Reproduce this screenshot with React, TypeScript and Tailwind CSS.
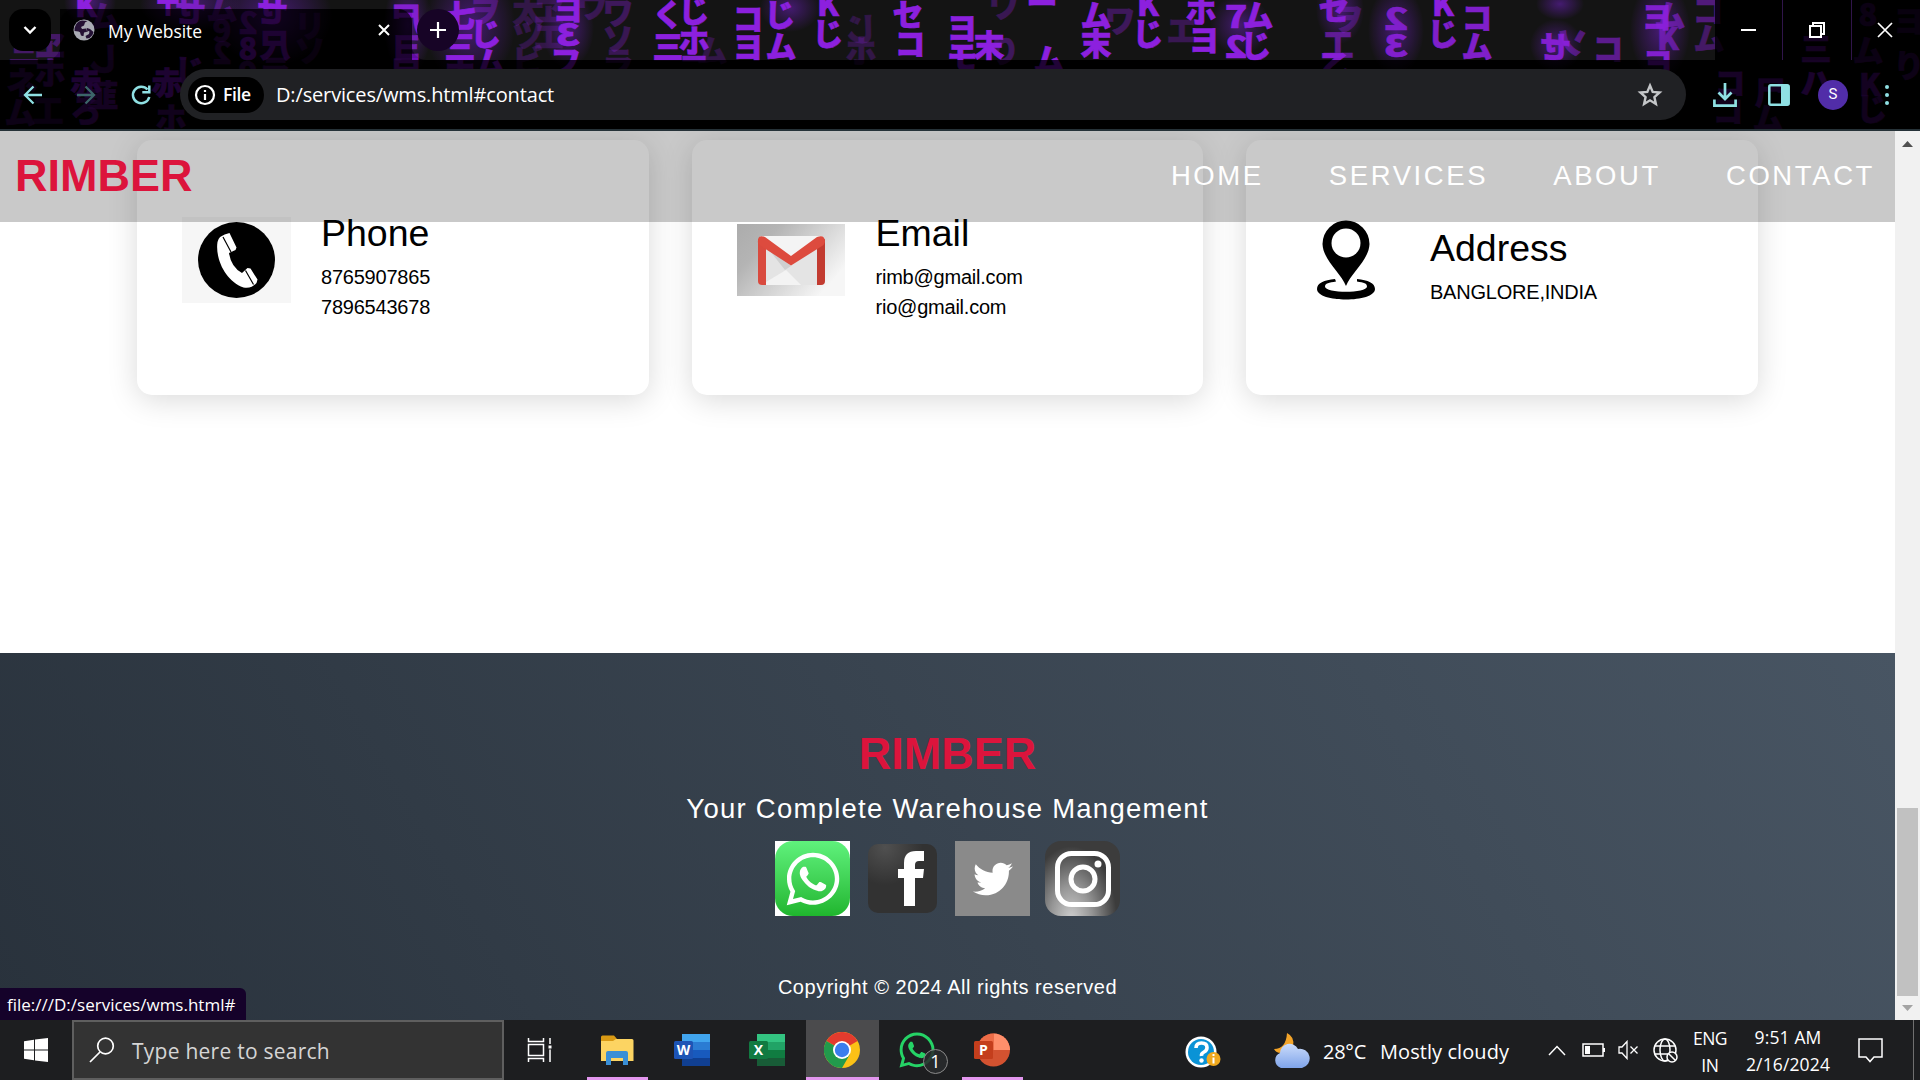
import React from "react";
import { FaWhatsapp, FaTwitter } from "react-icons/fa";

// character, centre x, centre y, opacity, horizontal scale
const glyphs: [string, number, number, number, number][] = [
  ["K", 86, 5, 1, 1], ["〒", 168, 3, 1, 1], ["せ", 190, 10, 0.8, -1], ["ム", 104, 16, 0.4, 1], ["し", 104, 58, 0.4, -1],
  ["2", 248, 22, 0.55, -1], ["8", 248, 48, 0.7, 1], ["せ", 272, 10, 1, -1], ["尺", 275, 45, 0.65, -1], ["9", 222, 30, 0.35, 1],
  ["ム", 222, 8, 0.4, 1], ["2", 222, 52, 0.35, -1], ["9", 248, 72, 0.4, 1], ["ラ", 275, 70, 0.4, 1], ["リ", 310, 25, 0.2, 1], ["ソ", 310, 50, 0.2, 1],
  ["赤", 86, 82, 0.9, 1], ["赤", 167, 82, 0.9, 1], ["じ", 190, 70, 0.7, 1], ["韮", 103, 95, 0.6, 1], ["ろ", 86, 110, 0.6, 1], ["ホ", 171, 118, 0.5, 1],
  ["ネ", 22, 82, 0.4, 1], ["ム", 20, 112, 0.4, 1], ["ヱ", 50, 45, 0.4, 1], ["ホ", 50, 72, 0.5, 1], ["工", 48, 110, 0.3, 1], ["三", 24, 50, 0.4, 1],
  ["尸", 407, 18, 0.9, -1], ["ヨ", 407, 46, 0.7, -1], ["尸", 407, 72, 0.8, -1], ["七", 460, 15, 1, 1], ["じ", 486, 33, 1, 1], ["三", 460, 46, 1, 1], ["ム", 490, 62, 1, 1], ["ホ", 460, 72, 0.8, 1],
  ["ヲ", 485, 10, 0.4, 1], ["太", 528, 10, 0.25, 1], ["ツ", 528, 35, 0.25, 1], ["ビ", 528, 60, 0.25, 1], ["ヱ", 549, 10, 0.25, 1], ["エ", 549, 36, 0.25, 1],
  ["ヨ", 568, 8, 1, 1], ["3", 568, 34, 1, -1.3], ["フ", 566, 61, 1, 1], ["ウ", 592, 5, 0.3, 1], ["ワ", 618, 12, 0.35, 1], ["ソ", 618, 38, 0.3, 1], ["ラ", 618, 62, 0.3, 1],
  ["く", 668, 14, 1, 1], ["じ", 694, 10, 1, 1], ["三", 668, 46, 1, 1], ["ホ", 694, 40, 1, 1], ["二", 694, 66, 0.9, 1], ["ム", 712, 50, 0.25, 1],
  ["コ", 748, 18, 1, 1], ["ヨ", 748, 46, 1, 1], ["じ", 780, 14, 1, 1], ["ム", 781, 46, 1, 1], ["K", 828, 4, 1, 1], ["じ", 828, 33, 1, 1],
  ["じ", 861, 28, 0.25, -1], ["ホ", 861, 50, 0.25, 1], ["セ", 908, 14, 1, 1], ["コ", 910, 43, 1, 1], ["ヨ", 962, 27, 1, 1], ["モ", 962, 56, 1, 1], ["末", 989, 45, 1, 1], ["ワ", 1004, 5, 0.3, 1], ["り", 1004, 50, 0.35, 1],
  ["ー", 1042, 2, 1, 1], ["ム", 1049, 59, 1, 1], ["ム", 1096, 15, 1, 1], ["末", 1096, 43, 1, 1], ["ワ", 1120, 20, 0.35, 1], ["K", 1148, 4, 1, 1], ["じ", 1148, 33, 1, 1],
  ["ホ", 1201, 10, 1, 1], ["ヨ", 1204, 39, 1, 1], ["エ", 1182, 30, 0.3, 1], ["7", 1236, 16, 1, 1.2], ["ム", 1258, 15, 1, 1], ["2", 1236, 46, 1, -1.2], ["じ", 1256, 45, 1, 1],
  ["セ", 1334, 8, 0.9, 1], ["ヲ", 1348, 18, 0.35, 1], ["工", 1338, 44, 0.6, 1], ["乙", 1335, 66, 0.9, 1], ["2", 1396, 18, 0.85, -1.3], ["3", 1396, 45, 0.9, -1.3], ["K", 1443, 4, 1, 1], ["じ", 1443, 33, 0.9, 1], ["コ", 1477, 17, 0.9, 1], ["ム", 1477, 46, 0.9, 1],
  ["せ", 1555, 46, 0.9, -1], ["ソ", 1572, 42, 0.5, -1], ["コ", 1608, 48, 0.6, 1], ["ヨ", 1657, 16, 0.9, 1], ["ム", 1670, 15, 0.6, 1], ["K", 1668, 38, 0.6, 1], ["ヨ", 1658, 62, 0.9, 1], ["コ", 1708, 10, 0.5, 1], ["ム", 1709, 38, 0.4, 1],
  ["コ", 1730, 82, 0.7, 1], ["尸", 1770, 92, 0.6, 1], ["ハ", 1816, 82, 0.8, 1], ["K", 1870, 84, 0.6, 1], ["じ", 1872, 108, 0.5, 1], ["三", 1816, 48, 0.7, 1], ["8", 1868, 14, 0.4, 1], ["ム", 1868, 50, 0.4, 1], ["り", 1909, 65, 0.4, 1], ["ヨ", 1909, 20, 0.3, 1], ["コ", 1728, 110, 0.5, 1], ["ム", 1768, 118, 0.4, 1],
];

const glows: [number, number, number, number][] = [
  [470, 25, 45, 60], [568, 28, 26, 40], [272, 15, 60, 50], [790, 8, 30, 24], [90, 2, 26, 24], [190, 4, 50, 28], [1396, 30, 28, 45], [1560, 4, 24, 16], [1660, 30, 30, 50], [1240, 25, 30, 30], [408, 25, 24, 50], [1340, 10, 24, 34], [1556, 45, 26, 26],
];

function Rain() {
  return (
    <svg className="absolute inset-0 h-full w-full" viewBox="0 0 1920 129" preserveAspectRatio="none">
      <defs>
        <radialGradient id="glow">
          <stop offset="0" stopColor="#6a10c8" stopOpacity="0.5" />
          <stop offset="1" stopColor="#6a10c8" stopOpacity="0" />
        </radialGradient>
      </defs>
      {glows.map(([x, y, rx, ry], i) => (
        <ellipse key={i} cx={x} cy={y} rx={rx} ry={ry} fill="url(#glow)" />
      ))}
      {glyphs.map(([c, x, y, o, f], i) => (
        <text key={i} transform={`translate(${x} ${y + 11.5}) scale(${f} 1)`} textAnchor="middle" fontSize="31" fontWeight="900" fill="#8410dc" stroke="#8410dc" strokeWidth="0.6" opacity={o} fontFamily='"Noto Sans CJK JP", sans-serif'>
          {c}
        </text>
      ))}
    </svg>
  );
}

function Browser() {
  return (
    <div className="relative h-[131px] shrink-0 overflow-hidden border-b-2 border-[#263238] bg-[#030303] font-['Open_Sans','Noto_Sans',sans-serif] text-white">
      <Rain />
      <div className="relative flex h-[60px]">
        <div className="relative flex w-[60px] justify-end rounded-br-[14px] bg-[#ffffff12]">
          <div className="mt-[9px] mr-[9px] flex h-[42px] w-[42px] items-center justify-center rounded-[14px] bg-black">
            <svg width="14" height="10" viewBox="0 0 14 10" fill="none" stroke="#fff" strokeWidth="2.4"><path d="M1.5 2l5.5 5.5L12.500 2" /></svg>
          </div>
        </div>
        <div className="flex w-[352px] flex-col">
          <div className="h-[9px] bg-[#ffffff12]" />
          <div className="flex flex-1 items-center rounded-t-[14px] bg-[#000000b0] pl-[13px]">
            <svg width="22" height="22" viewBox="0 0 22 22" className="-mt-[10px]"><circle cx="11" cy="11" r="10.500" fill="#a9abb4" /><path d="M9 1.500Q5 2 3 5.500T1.500 12l4 .5q2 0 2 2.500t3 2l.5-3.500 4-1-2-3-4 .5-1-2 3-1.500 1-3 2.500-1.500zM14 9l3 1 3.500 3-1 3-3 3-3 .5-1-2.500 3.500-2 .5-2.500-3.500-1.500z" fill="#241134" /></svg>
            <span className="-mt-[6px] ml-[13px] text-[17.500px] tracking-[-0.060px] whitespace-nowrap">My Website</span>
            <svg width="12" height="12" viewBox="0 0 12 12" className="-mt-[9px] mr-[22px] ml-auto" stroke="#fff" strokeWidth="2"><path d="M1 1l10 10M11 1L1 11" /></svg>
          </div>
        </div>
        <div className="flex w-[1303px] rounded-bl-[14px] bg-[#ffffff12]">
          <div className="mt-[9px] ml-[5px] flex h-[42px] w-[42px] items-center justify-center rounded-full bg-[#170426]">
            <svg width="16" height="16" viewBox="0 0 16 16" stroke="#fff" strokeWidth="2.2"><path d="M8 0v16M0 8h16" /></svg>
          </div>
        </div>
        <div className="flex flex-1 bg-[#000000c8]">
          <div className="flex w-[68px] items-center justify-center border-r border-[#30154a]"><div className="h-[2px] w-[15px] bg-white" /></div>
          <div className="flex w-[69px] items-center justify-center border-r border-[#30154a] pr-px">
            <svg width="16" height="16" viewBox="0 0 16 16" fill="none" stroke="#fff" strokeWidth="2"><path d="M1 4h11v11H1zM4 4V1h11v11h-3" /></svg>
          </div>
          <div className="flex flex-1 items-center justify-center pr-[2px]">
            <svg width="16" height="16" viewBox="0 0 16 16" stroke="#fff" strokeWidth="1.700"><path d="M1 1l14 14M15 1L1 15" /></svg>
          </div>
        </div>
      </div>
      <div className="relative flex h-[69px] items-center bg-[#000000c0]">
        <svg width="20" height="20" viewBox="0 0 20 20" className="ml-[23px]" fill="none" stroke="#8fe0e3" strokeWidth="2.300"><path d="M19 10H3M10.500 1.500L2 10l8.500 8.500" /></svg>
        <svg width="20" height="20" viewBox="0 0 20 20" className="ml-[33px]" fill="none" stroke="#3c6569" strokeWidth="2.300"><path d="M1 10h16M9.500 1.500L18 10l-8.500 8.500" /></svg>
        <svg width="22" height="22" viewBox="0 0 22 22" className="ml-[34px]" fill="none" stroke="#8fe0e3" strokeWidth="2.500"><path d="M17.500 5.500A8.300 8.300 0 1 0 19.300 13M19.300 1.500v6.800h-7" /></svg>
        <div className="ml-[28px] flex h-[51px] w-[1506px] items-center rounded-full bg-[#202124]">
          <div className="ml-[8px] flex h-[36px] w-[76px] items-center rounded-full bg-black">
            <svg width="22" height="22" viewBox="0 0 22 22" className="ml-[6px]" fill="none" stroke="#fff" strokeWidth="2.200"><circle cx="11" cy="11" r="9" /><path d="M11 10v6M11 6v2" /></svg>
            <span className="ml-[7px] text-[17.500px] font-semibold tracking-[-0.400px]">File</span>
          </div>
          <span className="ml-[12px] text-[20px] tracking-[-0.150px] whitespace-nowrap">D:/services/wms.html#contact</span>
          <svg width="26" height="26" viewBox="0 0 26 26" className="mr-[23px] ml-auto" fill="none" stroke="#c4c6c8" strokeWidth="2.400"><path d="M13 3.500l2.700 6.400 6.900.6-5.200 4.600 1.500 6.800-5.900-3.600-5.900 3.600 1.500-6.800L3.400 10.500l6.900-.6z" /></svg>
        </div>
        <svg width="24" height="26" viewBox="0 0 24 26" className="ml-[27px]" fill="none" stroke="#8fe0e3" strokeWidth="2.700"><path d="M12 1v15M5.500 10.500L12 17l6.500-6.500M1.400 17.500v6.100h21.200v-6.100" /></svg>
        <svg width="22" height="22" viewBox="0 0 22 22" className="ml-[31px]"><rect x="1.300" y="1.300" width="19.400" height="19.400" rx="1.500" fill="none" stroke="#8fe0e3" strokeWidth="2.500" /><path d="M13 1h8v20h-8z" fill="#8fe0e3" /></svg>
        <div className="ml-[28px] flex h-[30px] w-[30px] items-center justify-center rounded-full bg-[#512da8] font-[Roboto,sans-serif] text-[15px]">S</div>
        <div className="ml-[37px] flex flex-col gap-[4px]"><i className="h-[4px] w-[4px] rounded-full bg-[#8fe0e3]" /><i className="h-[4px] w-[4px] rounded-full bg-[#8fe0e3]" /><i className="h-[4px] w-[4px] rounded-full bg-[#8fe0e3]" /></div>
      </div>
    </div>
  );
}

function Card({ icon, title, lines, top }: { icon: React.ReactNode; title: string; lines: string[]; top: string }) {
  return (
    <div className="flex h-[255px] w-[511.500px] rounded-[15px] bg-white pl-[45px] shadow-[0_5px_30px_rgba(0,0,0,0.15)]">
      <div className="flex h-[240px] w-[109px] items-center justify-center">{icon}</div>
      <div className={`ml-[30px] ${top}`}>
        <h2 className="text-[37.500px] leading-[44px]">{title}</h2>
        <div className="mt-[7px] text-[20px] leading-[30px] tracking-[-0.220px]">
          {lines.map((l) => <p key={l}>{l}</p>)}
        </div>
      </div>
    </div>
  );
}

const phone = (
  <svg width="109" height="86" viewBox="0 0 109 86"><path d="M0 0h109v86H0z" fill="#f6f6f6" /><ellipse cx="54.500" cy="43" rx="38.500" ry="38" /><path d="M47.500 16l7 14.500-1 2.500-6.500 3q2 14 13 20l5.500-5 3 .5 7 11-1 3.500q-5 6-13 4.500C43 64 33 41 35.500 25q1-6.500 12-9z" fill="#fff" /><path d="M41 20l8 15M63.500 53.500l8 14" stroke="#000" strokeWidth="1.200" /></svg>
);
const mail = (
  <svg width="108" height="72" viewBox="0 0 108 72"><defs><linearGradient id="mg" x2="1" y2=".6"><stop stopColor="#acacac" /><stop offset=".3" stopColor="#b4b4b4" /><stop offset="1" stopColor="#f6f6f6" /></linearGradient></defs><path d="M0 0h108v72H0z" fill="url(#mg)" /><path d="M23 12h63v49H23z" fill="#e4e4e4" /><path d="M26 12h58L54 36z" fill="#f4f4f4" /><path d="M29 58l20-12 15 15H29z" fill="#f3f3f3" /><path d="M29 22l25 20-6 4z" fill="#cfcfcf" /><path d="M21 15v42q0 4 4 4h4V20z" fill="#d94a3e" /><path d="M80 20v41h4q4 0 4-4V15z" fill="#c23b30" /><path d="M21 19q-1-9 7-6l26 19 26-19q8-3 8 5-1 3-3 4L54 41.500 24 22z" fill="#dd4b3e" /></svg>
);
const pin = (
  <svg width="58" height="80" viewBox="0 0 58 80"><path d="M29 66C24 53 6 40 5.500 24a23.500 23.500 0 0 1 47 0C52 40 34 53 29 66z" /><ellipse cx="29" cy="23" rx="14.500" ry="14.500" fill="#fff" /><path d="M18 59C7 60 0 63 0 69c0 14 58 14 58 0 0-6-7-9-18-10v2.500c7 1 10 2 10 5 0 7-42 7-42 0 0-3 4-4 11-5z" /></svg>
);

function Page() {
  return (
    <div className="flex h-[889px] shrink-0 font-['Liberation_Sans',Arial,sans-serif]">
      <div className="relative flex w-[1895px] flex-col overflow-hidden bg-white">
        <div className="flex gap-[43px] pt-[9px] pl-[137px] text-black">
          <Card icon={phone} title="Phone" lines={["8765907865", "7896543678"]} top="pt-[71px]" />
          <Card icon={mail} title="Email" lines={["rimb@gmail.com", "rio@gmail.com"]} top="pt-[71px]" />
          <Card icon={pin} title="Address" lines={["BANGLORE,INDIA"]} top="pt-[86px]" />
        </div>
        <header className="absolute inset-x-0 top-0 flex h-[91px] items-center bg-[#00000036] pb-[2px] pl-[15px]">
          <b className="text-[45px] leading-none text-[#dc143c]">RIMBER</b>
          <nav className="mr-[20px] ml-auto flex gap-[65px] text-[27.500px] tracking-[2.600px] text-white">
            <span>HOME</span><span>SERVICES</span><span>ABOUT</span><span>CONTACT</span>
          </nav>
        </header>
        <footer className="mt-auto flex h-[367px] flex-col items-center bg-[linear-gradient(60deg,#29323c_0%,#485563_100%)] text-white">
          <b className="mt-[78px] text-[45px] leading-[45px] text-[#dc143c]">RIMBER</b>
          <p className="mt-[16px] text-[27.500px] leading-[34px] tracking-[1.250px]">Your Complete Warehouse Mangement</p>
          <div className="mt-[15px] flex gap-[15px]">
            <div className="bg-white"><div className="flex h-[75px] w-[75px] items-center justify-center rounded-[18px] bg-gradient-to-b from-[#5ff27c] to-[#1fb62d]"><FaWhatsapp size={60} /></div></div>
            <div className="flex h-[75px] w-[75px] items-center justify-center"><div className="flex h-[69px] w-[69px] items-end justify-end rounded-[10px] bg-[#323232] bg-[radial-gradient(circle_at_25%_5%,#505050_0%,#323232_45%)] pr-[13px] pb-[7px]"><svg width="26" height="55" viewBox="0 0 26 55" fill="#fff"><path d="M6 55V27H0v-9h6v-6Q6 0 18 0h8v10h-5q-4 0-4 4v4h9l-1 9h-8v28z" /></svg></div></div>
            <div className="flex h-[75px] w-[75px] items-center justify-center bg-[#8a8a8a]"><FaTwitter size={40} /></div>
            <div className="flex h-[75px] w-[75px] items-center justify-center rounded-[16px] bg-[#3c3c3c] bg-[radial-gradient(ellipse_at_35%_105%,#cfcfcf_0%,#969696_30%,#3c3c3c_66%)]"><svg width="56" height="56" viewBox="0 0 56 56" fill="none" stroke="#fff" strokeWidth="5"><rect x="2.500" y="2.500" width="51" height="51" rx="14" /><circle cx="28" cy="28" r="12" /><circle cx="43" cy="13" r="3.500" fill="#fff" stroke="none" /></svg></div>
          </div>
          <p className="mt-[59px] text-[20px] leading-[24px] tracking-[0.520px]">Copyright © 2024 All rights reserved</p>
        </footer>
        <div className="absolute bottom-0 left-0 flex h-[32px] w-[246px] items-center rounded-tr-[6px] bg-[#15022a] pt-[2px] pl-[7px] font-['Open_Sans',sans-serif] text-[17px] whitespace-nowrap text-white">file:///D:/services/wms.html#</div>
      </div>
      <div className="flex w-[25px] flex-col items-center bg-[#f1f1f1]">
        <svg width="11" height="6" viewBox="0 0 11 6" className="mt-[10px]" fill="#505050"><path d="M0 6l5.500-6L11 6z" /></svg>
        <div className="mt-[661px] h-[188px] w-[21px] bg-[#c1c1c1]" />
        <svg width="11" height="6" viewBox="0 0 11 6" className="mt-[9px]" fill="#a3a3a3"><path d="M0 0h11L5.500 6z" /></svg>
      </div>
    </div>
  );
}

function Office({ letter, dark, shades }: { letter: string; dark: string; shades: string[] }) {
  return (
    <svg width="36" height="34" viewBox="0 0 36 34">
      {shades.map((s, i) => <rect key={s} x="8" y={1 + i * 8} width="28" height="8" fill={s} />)}
      <rect x="0" y="8" width="19" height="18" rx="1.500" fill={dark} />
      <text x="9.500" y="22" textAnchor="middle" fontSize="14" fontWeight="700" fill="#fff" fontFamily="Open Sans, sans-serif">{letter}</text>
    </svg>
  );
}

function Taskbar() {
  const cell = "relative flex h-full items-center justify-center";
  const line = "absolute bottom-0 h-[3px] bg-[#e296ee]";
  return (
    <div className="flex h-[60px] shrink-0 bg-[#1d1e20] font-['Open_Sans','Noto_Sans',sans-serif] text-white">
      <div className={`${cell} w-[72px]`}><svg width="24" height="24" viewBox="0 0 24 24" fill="#fff"><path d="M0 3.200L10 1.800V11.500H0zM11 1.600L24 0v11.500H11zM0 12.500h10v9.700L0 20.800zM11 12.500h13V24l-13-1.600z" /></svg></div>
      <div className="flex h-full w-[432px] items-center border-2 border-[#5f5f5f] bg-[#333333] pl-[15px]">
        <svg width="26" height="26" viewBox="0 0 26 26" fill="none" stroke="#fff" strokeWidth="1.700"><circle cx="16.500" cy="9" r="7.800" /><path d="M11 15L1 25" /></svg>
        <span className="ml-[17px] pt-[4px] text-[21px] tracking-[0.250px] whitespace-nowrap text-[#d5d5d5]">Type here to search</span>
      </div>
      <div className={`${cell} w-[72px]`}><svg width="26" height="26" viewBox="0 0 26 26" fill="none" stroke="#fff" strokeWidth="1.500"><path d="M1.500 1v3.500h15V1M1.500 25v-3.500h15V25M1.500 7.500h15v11h-15zM23 1v6M23 12.500V25" /><path d="M21.500 8.500h3v3h-3z" fill="#fff" stroke="none" /></svg></div>
      <div className={`${cell} ml-[5px] w-[73px]`}>
        <svg width="34" height="30" viewBox="0 0 34 30" className="mr-[2px]"><path d="M1 2q0-1.500 1.500-1.500H14L17 4v3H1z" fill="#d99a14" /><path d="M1 6h12l3-2h16q1.500 0 1.500 1.500V26H1z" fill="#fcd462" /><path d="M6 30V18q0-2 2-2h18q2 0 2 2v12h-5v-7H11v7z" fill="#3a8fd6" /></svg>
        <i className={`${line} left-[6px] w-[61px]`} />
      </div>
      <div className={`${cell} w-[75px]`}><Office letter="W" dark="#1d54b5" shades={["#41a5ee", "#2b7cd3", "#185abd", "#103f91"]} /></div>
      <div className={`${cell} w-[75px]`}><Office letter="X" dark="#117a41" shades={["#33c481", "#21a366", "#107c41", "#185c37"]} /></div>
      <div className={`${cell} ml-[2px] w-[73px] bg-[#4b4b4d]`}>
        <svg width="36" height="36" viewBox="0 0 36 36" className="mr-px"><circle cx="18" cy="18" r="18" fill="#fbc116" /><path d="M18 18L2.400 9A18 18 0 0 1 33.600 9z" fill="#e33b2e" /><path d="M2.400 9A18 18 0 0 0 18 36l7.800-13.500L18 18z" fill="#229a4c" /><circle cx="18" cy="18" r="9" fill="#fff" /><circle cx="18" cy="18" r="7.200" fill="#3b7ded" /></svg>
        <i className={`${line} w-full`} />
      </div>
      <div className={`${cell} w-[76px]`}>
        <FaWhatsapp size={40} color="#25d366" />
        <div className="absolute top-[29px] left-[44px] flex h-[25px] w-[25px] items-center justify-center rounded-full border border-[#8a8a8a] bg-[#2a2b2ddd] text-[18px]">1</div>
      </div>
      <div className={`${cell} w-[75px]`}>
        <svg width="36" height="34" viewBox="0 0 36 34" className="mr-[2px]"><circle cx="19.500" cy="17" r="16.500" fill="#d35230" /><path d="M19.500.5A16.500 16.500 0 0 1 36 17H19.500z" fill="#ff8f6b" /><path d="M19.500.5V17H3A16.500 16.500 0 0 1 19.500.5z" fill="#ed6c47" /><rect y="8" width="19" height="18" rx="1.500" fill="#c43e1c" /><text x="9.500" y="22" textAnchor="middle" fontSize="14" fontWeight="700" fill="#fff" fontFamily="Open Sans, sans-serif">P</text></svg>
        <i className={`${line} left-[7px] w-[61px]`} />
      </div>
      <div className={`${cell} ml-[155px] w-[36px]`}>
        <svg width="36" height="34" viewBox="0 0 36 34" className="mt-[3px]"><circle cx="16" cy="17" r="15.500" fill="#fff" /><circle cx="16" cy="17" r="13" fill="#0a93d6" /><path d="M11 13q0-5 5.500-5t5.500 4.500q0 3-3 4.500t-2.500 4" fill="none" stroke="#fff" strokeWidth="3.600" /><circle cx="16.500" cy="25.500" r="2.200" fill="#fff" /><circle cx="28.500" cy="24" r="7" fill="#f0a91e" /><path d="M28.500 22.500v6M28.500 19v2" stroke="#fff" strokeWidth="2" /></svg>
      </div>
      <div className={`${cell} ml-[52px] w-[37px]`}>
        <svg width="37" height="36" viewBox="0 0 37 36"><defs><linearGradient id="cl" x2="0" y2="1"><stop stopColor="#cbdcfb" /><stop offset="1" stopColor="#7fa4ea" /></linearGradient></defs><path d="M14 1q8 4 6 13t-12 7Q3 21 1 17q12 0 13-16z" fill="#f3a429" /><path d="M8 36a8 8 0 0 1-1-15 9.500 9.500 0 0 1 18-4 9.500 9.500 0 0 1 4 19z" fill="url(#cl)" /></svg>
      </div>
      <div className="ml-[13px] flex items-center pt-[3px] text-[20px] whitespace-nowrap"><span className="w-[57px] tracking-[-0.250px]">28°C</span><span className="tracking-[0.070px]">Mostly cloudy</span></div>
      <div className="ml-auto flex items-center">
        <svg width="18" height="11" viewBox="0 0 18 11" fill="none" stroke="#fff" strokeWidth="1.500"><path d="M1 10l8-8.500L17 10" /></svg>
        <svg width="23" height="14" viewBox="0 0 23 14" className="ml-[16px]" fill="none" stroke="#fff" strokeWidth="1.500"><path d="M1 1h20v12H1zM22.300 5v4" /><path d="M3 3h5v8H3z" fill="#fff" stroke="none" /></svg>
        <svg width="21" height="20" viewBox="0 0 21 20" className="ml-[13px]" fill="none" stroke="#fff" strokeWidth="1.300"><path d="M1 7h3l5-5.500v17L4 13H1zM12.500 6.500l7 7M19.500 6.500l-7 7" /></svg>
        <svg width="25" height="25" viewBox="0 0 25 25" className="ml-[14px]" fill="none" stroke="#fff" strokeWidth="1.500"><circle cx="12" cy="12" r="11" /><ellipse cx="12" cy="12" rx="5" ry="11" /><path d="M2 8h20M2 16h20" /><circle cx="19" cy="19" r="5" fill="#1d1e20" /><path d="M15.500 15.500l7 7" /></svg>
      </div>
      <div className="ml-[12px] flex w-[40px] flex-col items-center pt-[5px] text-[17.500px] leading-[27px]"><span className="tracking-[-0.600px]">ENG</span><span className="tracking-[-0.400px]">IN</span></div>
      <div className="ml-[14px] flex w-[88px] flex-col items-center pt-[4px] text-[17.500px] leading-[27px] tracking-[0.140px] whitespace-nowrap"><span>9:51 AM</span><span>2/16/2024</span></div>
      <div className="flex items-center"><svg width="25" height="25" viewBox="0 0 25 25" className="ml-[26px]" fill="none" stroke="#fff" strokeWidth="1.500"><path d="M1 1h23v18H16l-4 4.500L8 19H1z" /></svg></div>
      <div className="mr-[6px] ml-[30px] w-px bg-[#707070]" />
    </div>
  );
}

export default function App() {
  return (
    <div className="flex h-[1080px] w-[1920px] flex-col overflow-hidden bg-white">
      <Browser />
      <Page />
      <Taskbar />
    </div>
  );
}
